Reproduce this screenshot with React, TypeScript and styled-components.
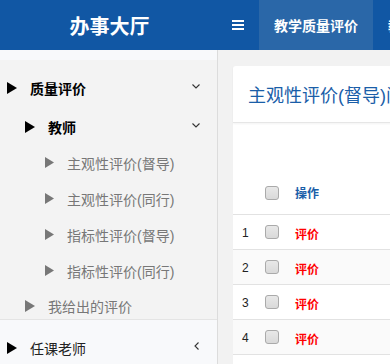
import React from 'react';
import styled, { createGlobalStyle } from 'styled-components';

const GlobalStyle = createGlobalStyle`
  html, body {
    margin: 0;
    padding: 0;
    overflow: hidden;
  }
  body {
    font-family: "Liberation Sans", "Noto Sans CJK SC", sans-serif;
    background: #f2f2f2;
  }
  * {
    box-sizing: border-box;
  }
`;

type MenuLevel = 0 | 1 | 2;

type MenuItem = {
  label: string;
  level: MenuLevel;
  strong?: boolean;
  muted?: boolean;
  arrow?: 'down' | 'left';
};

const openMenu: MenuItem[] = [
  { label: '质量评价', level: 0, strong: true, arrow: 'down' },
  { label: '教师', level: 1, strong: true, arrow: 'down' },
  { label: '主观性评价(督导)', level: 2, muted: true },
  { label: '主观性评价(同行)', level: 2, muted: true },
  { label: '指标性评价(督导)', level: 2, muted: true },
  { label: '指标性评价(同行)', level: 2, muted: true },
  { label: '我给出的评价', level: 1, muted: true },
];

const indent: Record<MenuLevel, number> = { 0: 7, 1: 25, 2: 45 };

const rows = [1, 2, 3, 4];

const Arrow: React.FC<{ dir: 'down' | 'left' }> = ({ dir }) => (
  <ArrowBox>
    {dir === 'down' ? (
      <svg width="8" height="5" viewBox="0 0 8 5">
        <path d="M0.5 0.5 L4 4 L7.5 0.5" fill="none" stroke="#333" strokeWidth="1.1" />
      </svg>
    ) : (
      <svg width="5" height="8" viewBox="0 0 5 8">
        <path d="M4.5 0.5 L1 4 L4.5 7.5" fill="none" stroke="#333" strokeWidth="1.1" />
      </svg>
    )}
  </ArrowBox>
);

const Triangle: React.FC<{ muted?: boolean; small?: boolean }> = ({ muted, small }) => (
  <TriangleIcon width={small ? 9 : 10} height={small ? 11 : 12} viewBox="0 0 10 12">
    <polygon points="0,0 10,6 0,12" fill={muted ? '#777' : '#000'} />
  </TriangleIcon>
);

const SideRow: React.FC<{ item: MenuItem }> = ({ item }) => (
  <MenuRow level={item.level}>
    <Triangle muted={item.muted} small={item.level === 2} />
    <MenuText strong={item.strong} muted={item.muted}>
      {item.label}
    </MenuText>
    {item.arrow && <Arrow dir={item.arrow} />}
  </MenuRow>
);

export default function App() {
  return (
    <>
      <GlobalStyle />
      <Page>
        <Header>
          <Logo>办事大厅</Logo>
          <Toggle>
            <Bar />
            <Bar />
            <Bar />
          </Toggle>
          <Tabs>
            <Tab active>教学质量评价</Tab>
            <Tab>教学任务管理</Tab>
          </Tabs>
        </Header>
        <Main>
          <Sidebar>
            <SideTop />
            <OpenGroup>
              {openMenu.map((item) => (
                <SideRow key={item.label} item={item} />
              ))}
            </OpenGroup>
            <ClosedGroup>
              <MenuRow level={0}>
                <Triangle />
                <MenuText>任课老师</MenuText>
                <Arrow dir="left" />
              </MenuRow>
            </ClosedGroup>
          </Sidebar>
          <Content>
            <Panel>
              <PanelHead>
                <PanelTitle>主观性评价(督导)问卷列表</PanelTitle>
              </PanelHead>
              <PanelBody>
                <Table>
                  <thead>
                    <tr>
                      <NumCell as="th" />
                      <CheckCell as="th">
                        <CheckBox />
                      </CheckCell>
                      <HeadCell>操作</HeadCell>
                    </tr>
                  </thead>
                  <tbody>
                    {rows.map((n) => (
                      <BodyRow key={n} odd={n % 2 === 0}>
                        <NumCell>{n}</NumCell>
                        <CheckCell>
                          <CheckBox />
                        </CheckCell>
                        <ActionCell>评价</ActionCell>
                      </BodyRow>
                    ))}
                  </tbody>
                </Table>
              </PanelBody>
            </Panel>
          </Content>
        </Main>
      </Page>
    </>
  );
}

const Page = styled.div`
  width: 390px;
  height: 364px;
  display: flex;
  flex-direction: column;
  overflow: hidden;
`;

const Header = styled.div`
  height: 50px;
  flex-shrink: 0;
  display: flex;
  background: #1157a4;
  color: #fff;
`;

const Logo = styled.div`
  width: 217px;
  flex-shrink: 0;
  display: flex;
  align-items: center;
  justify-content: center;
  font-size: 20px;
  font-weight: bold;
  padding-left: 2px;
`;

const Toggle = styled.div`
  width: 42px;
  flex-shrink: 0;
  display: flex;
  flex-direction: column;
  align-items: center;
  justify-content: center;
  gap: 2px;
`;

const Bar = styled.span`
  display: block;
  width: 12px;
  height: 2px;
  background: #fff;
`;

const Tabs = styled.div`
  display: flex;
  flex: 1;
  overflow: hidden;
  white-space: nowrap;
`;

const Tab = styled.div<{ active?: boolean }>`
  display: flex;
  align-items: center;
  padding: 0 15px;
  font-size: 14px;
  font-weight: bold;
  background: ${({ active }) => (active ? '#2a67a8' : 'transparent')};
  flex-shrink: 0;
`;

const Main = styled.div`
  flex: 1;
  display: flex;
  min-height: 0;
`;

const Sidebar = styled.div`
  width: 218px;
  flex-shrink: 0;
  border-right: 1px solid #dcdcdc;
  background: #f8f9fb;
  display: flex;
  flex-direction: column;
`;

const SideTop = styled.div`
  height: 16px;
`;

const OpenGroup = styled.div`
  background: #f3f3f3;
  padding-bottom: 1px;
`;

const ClosedGroup = styled.div`
  border-top: 1px solid #e4e4e4;
`;

const MenuRow = styled.div<{ level: MenuLevel }>`
  display: flex;
  align-items: center;
  height: ${({ level }) => (level === 0 ? 44 : level === 1 ? 35 : 36)}px;
  padding-top: 11px;
  padding-left: ${({ level }) => indent[level]}px;
  padding-right: 17px;
`;

const TriangleIcon = styled.svg`
  flex-shrink: 0;
  margin-right: 13px;
`;

const MenuText = styled.span<{ strong?: boolean; muted?: boolean }>`
  flex: 1;
  font-size: 14px;
  font-weight: ${({ strong }) => (strong ? 'bold' : 'normal')};
  color: ${({ strong, muted }) => (muted ? '#777' : strong ? '#000' : '#222')};
  white-space: nowrap;
`;

const ArrowBox = styled.span`
  display: flex;
  align-items: center;
  justify-content: center;
  width: 8px;
  margin-top: -3px;
`;

const Content = styled.div`
  flex: 1;
  min-width: 0;
  padding: 16px 0 0 15px;
  background: #f2f2f2;
`;

const Panel = styled.div`
  width: 260px;
  height: 100%;
  background: #fff;
  border-top-left-radius: 3px;
`;

const PanelHead = styled.div`
  height: 57px;
  display: flex;
  align-items: center;
  padding-left: 15px;
  border-bottom: 1px solid #e6e6e6;
  box-shadow: 0 1px 2px rgba(0, 0, 0, 0.05);
  overflow: hidden;
`;

const PanelTitle = styled.div`
  font-size: 18px;
  color: #1a5ea8;
  white-space: nowrap;
`;

const PanelBody = styled.div`
  padding-top: 48px;
`;

const Table = styled.table`
  width: 100%;
  border-collapse: collapse;
  font-size: 12px;

  th,
  td {
    padding: 0;
    border-bottom: 1px solid #e2e2e2;
  }
  thead tr {
    height: 43px;
  }
`;

const BodyRow = styled.tr<{ odd?: boolean }>`
  height: 35px;
  background: ${({ odd }) => (odd ? '#fafafa' : '#fff')};
`;

const NumCell = styled.td`
  width: 25px;
  padding-left: 9px !important;
  padding-top: 3px !important;
  color: #222;
  text-align: left;
`;

const CheckCell = styled.td`
  width: 28px;
  text-align: center;
  vertical-align: middle;
`;

const HeadCell = styled.th`
  text-align: left;
  padding-left: 9px !important;
  color: #1a5ea8;
  font-weight: bold;
`;

const ActionCell = styled.td`
  padding-left: 9px !important;
  padding-top: 3px !important;
  color: #ff0000;
  font-weight: bold;
`;

const CheckBox = styled.span`
  display: inline-block;
  vertical-align: middle;
  width: 14px;
  height: 14px;
  border: 1px solid #aaa;
  border-radius: 3px;
  background: linear-gradient(#e8e8e8, #d9d9d9);
`;
